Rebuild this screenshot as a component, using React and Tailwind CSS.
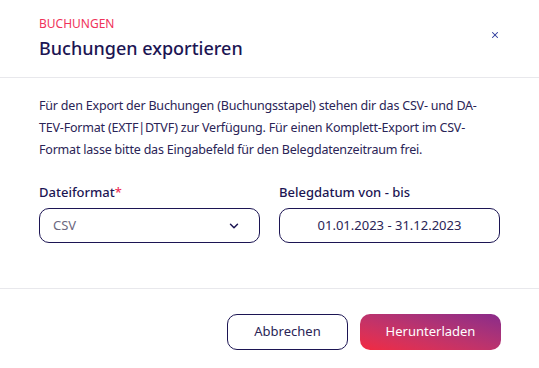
import { ChevronDown, X } from "lucide-react";

const lines = [
  "Für den Export der Buchungen (Buchungsstapel) stehen dir das CSV- und DA-",
  "TEV-Format (EXTF|DTVF) zur Verfügung. Für einen Komplett-Export im CSV-",
  "Format lasse bitte das Eingabefeld für den Belegdatenzeitraum frei.",
];

function App() {
  return (
    <div
      className="w-[539px] h-[368px] bg-white text-[#1c1553]"
      style={{ fontFamily: '"Noto Sans", "Open Sans", sans-serif' }}
    >
      {/* Header */}
      <div className="h-[78px] border-b border-[#e8e8ec] pl-[39px] pr-[38px] pt-[16px] flex justify-between">
        <div>
          <div className="text-[12px] leading-[16px] text-[#f0325a] uppercase">Buchungen</div>
          <h1 className="text-[18px] leading-[26px] mt-[3px] font-medium">Buchungen exportieren</h1>
        </div>
        <button className="mt-[13px] h-[12px] w-[12px] flex items-center justify-center text-[#2e3a9c]">
          <X size={10} strokeWidth={2.5} />
        </button>
      </div>

      {/* Body */}
      <div className="h-[211px] border-b border-[#e8e8ec] px-[39px] pt-[17px]">
        <p className="text-[12.5px] leading-[22px] text-[#2a2456] tracking-[-0.2px]">
          {lines.map((l) => (
            <span key={l} className="block whitespace-nowrap">{l}</span>
          ))}
        </p>

        <div className="grid grid-cols-2 gap-[19px] mt-[22px]">
          <div>
            <label className="block text-[13px] leading-[18px] font-medium">
              Dateiformat<span className="text-[#f0325a]">*</span>
            </label>
            <div className="mt-[7px] h-[35px] rounded-[10px] border border-[#1c1553] flex items-center justify-between pl-[13px] pr-[18px]">
              <span className="text-[13px] text-[#6b6880]">CSV</span>
              <ChevronDown size={14} strokeWidth={2.5} className="text-[#1c1553]" />
            </div>
          </div>
          <div>
            <label className="block text-[13px] leading-[18px] font-medium">Belegdatum von - bis</label>
            <div className="mt-[7px] h-[35px] rounded-[10px] border border-[#1c1553] flex items-center justify-center">
              <span className="text-[13px] text-[#2a2456]">01.01.2023 - 31.12.2023</span>
            </div>
          </div>
        </div>
      </div>

      {/* Footer */}
      <div className="flex justify-end gap-[12px] pr-[38px] pt-[25px]">
        <button className="w-[121px] h-[36px] rounded-[10px] border border-[#1c1553] text-[13px] text-[#2a2456]">
          Abbrechen
        </button>
        <button className="w-[141px] h-[36px] rounded-[10px] bg-gradient-to-tr from-[#f2293f] to-[#8a2a8a] text-[13px] text-white">
          Herunterladen
        </button>
      </div>
    </div>
  );
}

export default App;
